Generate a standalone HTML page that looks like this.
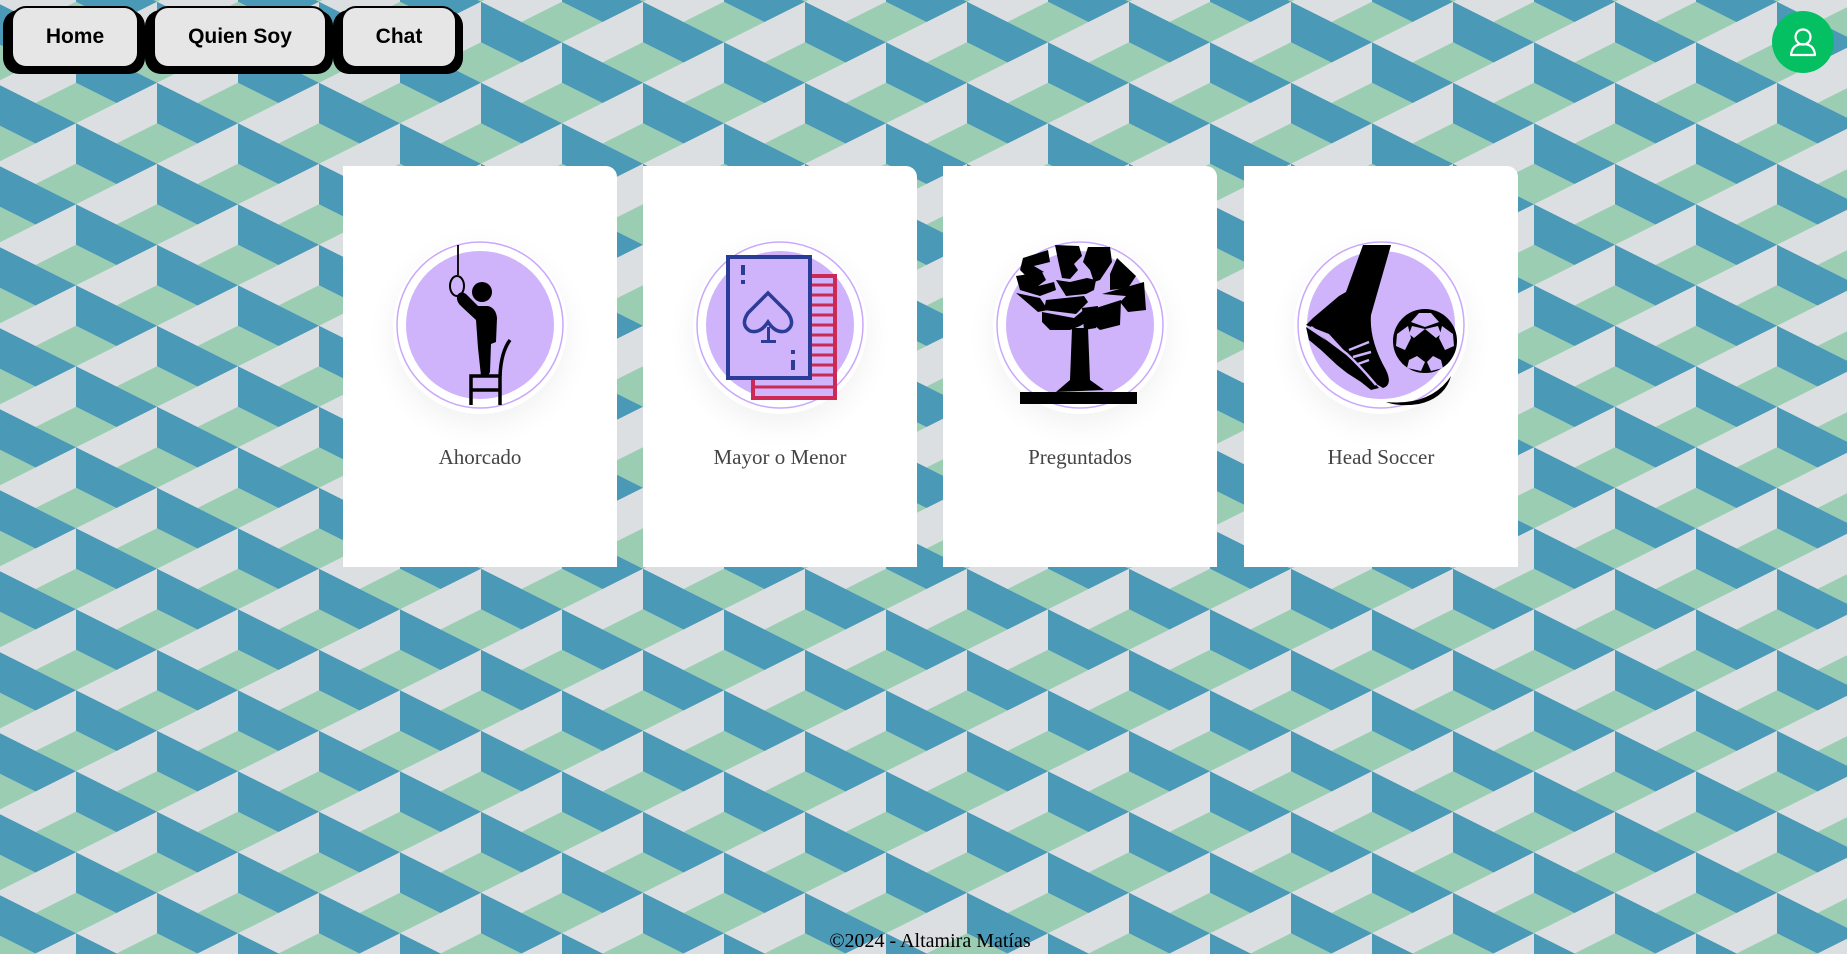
<!DOCTYPE html>
<html><head><meta charset="utf-8"><style>
html,body{margin:0;padding:0;width:1847px;height:954px;overflow:hidden;position:relative;font-family:"Liberation Serif",serif}
#bg{position:absolute;left:0;top:0}
.btn{position:absolute;top:8px;height:58px;background:#e6e6e6;border-radius:13px;box-shadow:0 0 0 2px #000,-7px 5px 0 3px #000,5px 5px 0 3px #000;font:bold 21px "Liberation Sans",sans-serif;color:#000;display:flex;align-items:center;justify-content:center}
.card{position:absolute;top:166px;width:274px;height:401px;background:#fff;border-top-right-radius:11px}
.card svg{position:absolute;left:47px;top:64px}
.card .sh{position:absolute;left:50px;top:74px;width:174px;height:174px;border-radius:50%;box-shadow:0 10px 30px rgba(0,0,0,.06)}
.card .t{position:absolute;left:0;width:100%;top:279px;text-align:center;font-size:21px;color:#444}
.av{position:absolute;left:1772px;top:11px;width:62px;height:62px;border-radius:50%;background:#04c062}
.foot{position:absolute;left:0;width:1860px;text-align:center;top:930px;font-size:20px;color:#000}
</style></head><body>
<svg id="bg" width="1847" height="954">
<defs><pattern id="p" width="162" height="81" patternUnits="userSpaceOnUse" x="76" y="22">
<rect width="162" height="81" fill="#dcdfe2"/>
<g fill="#9bcdb3">
<polygon points="-40.5,0 0,-20.25 40.5,0 0,20.25"/>
<polygon points="-40.5,81 0,60.75 40.5,81 0,101.25"/>
<polygon points="121.5,0 162,-20.25 202.5,0 162,20.25"/>
<polygon points="121.5,81 162,60.75 202.5,81 162,101.25"/>
<polygon points="40.5,40.5 81,20.25 121.5,40.5 81,60.75"/>
</g>
<g fill="#4a99b6">
<polygon points="0,20.25 81,60.75 40.5,81 0,60.75"/>
<polygon points="81,60.75 162,101.25 121.5,121.5 81,101.25"/>
<polygon points="81,-20.25 162,20.25 121.5,40.5 81,20.25"/>
</g>
</pattern></defs>
<rect width="1847" height="954" fill="url(#p)"/>
</svg>

<div class="btn" style="left:13px;width:124px">Home</div>
<div class="btn" style="left:155px;width:170px">Quien Soy</div>
<div class="btn" style="left:343px;width:112px">Chat</div>

<div class="av"><svg width="62" height="62" viewBox="0 0 62 62"><circle cx="31" cy="26" r="7.5" fill="none" stroke="#fff" stroke-width="2.2"/><path d="M19 44 Q20 33 31 33 Q42 33 43 44 Z" fill="none" stroke="#fff" stroke-width="2.2" stroke-linejoin="round"/></svg></div>

<div class="card" style="left:343px">
<div class="sh"></div>
<svg width="190" height="190" viewBox="0 0 190 190">
<circle cx="90" cy="95" r="83" fill="#fff" stroke="#c9a8fb" stroke-width="1.5"/>
<circle cx="90" cy="95" r="74" fill="#cfb3fb"/>
<line x1="68" y1="15" x2="68" y2="45" stroke="#000" stroke-width="1.8"/>
<ellipse cx="67" cy="56" rx="7" ry="10" fill="none" stroke="#000" stroke-width="2"/>
<circle cx="92" cy="62" r="10" fill="#000"/>
<path d="M67 66 Q70 60 76 64 L88 76 L98 76 Q106 78 107 88 L106 112 L101 114 L100 142 Q98 148 91 146 L88 118 L86 90 L72 77 Q66 72 67 66 Z" fill="#000"/>
<g stroke="#000" stroke-width="3.5" fill="none"><path d="M81 175 V146 H110 V175"/><line x1="81" y1="160" x2="110" y2="160"/><path d="M110 146 Q111 122 120 110"/></g>
</svg>
<div class="t">Ahorcado</div></div>

<div class="card" style="left:643px">
<div class="sh"></div>
<svg width="190" height="190" viewBox="0 0 190 190">
<circle cx="90" cy="95" r="83" fill="#fff" stroke="#c9a8fb" stroke-width="1.5"/>
<circle cx="90" cy="95" r="74" fill="#cfb3fb"/>
<rect x="63" y="46" width="82" height="122" fill="#cfb3fb" stroke="#cc2955" stroke-width="4"/>
<g stroke="#cc2955" stroke-width="3">
<path d="M120 55H145M120 65H145M120 75H145M120 85H145M120 95H145M120 105H145M120 115H145M120 125H145M120 135H145M120 145H145M63 157H145"/>
</g>
<rect x="38" y="27" width="82" height="121" fill="#cfb3fb" stroke="#2b3c96" stroke-width="4"/>
<g fill="#2b3c96"><rect x="51" y="35" width="4" height="10"/><rect x="51" y="50" width="4" height="4"/><rect x="101" y="120" width="4" height="4"/><rect x="101" y="130" width="4" height="10"/><rect x="71" y="110" width="15" height="3"/><rect x="77" y="97" width="3" height="14"/></g>
<path d="M78 63 L58 83 Q50 95 60 101 Q70 104 78 92 Q86 104 96 101 Q106 95 98 83 Z" fill="none" stroke="#2b3c96" stroke-width="3.5"/>
</svg>
<div class="t">Mayor o Menor</div></div>

<div class="card" style="left:943px">
<div class="sh"></div>
<svg width="190" height="190" viewBox="0 0 190 190">
<circle cx="90" cy="95" r="83" fill="#fff" stroke="#c9a8fb" stroke-width="1.5"/>
<circle cx="90" cy="95" r="74" fill="#cfb3fb"/>
<g fill="#000">
<polygon points="33,28 58,20 60,32 44,36 54,42 36,46 30,40"/>
<polygon points="26,46 52,42 56,50 48,56 64,52 66,60 50,66 30,60"/>
<polygon points="26,63 50,68 58,80 48,82"/>
<polygon points="65,15 89,16 92,26 84,34 88,40 80,49 72,48 68,30"/>
<polygon points="98,17 120,17 122,32 110,50 104,52 100,40 93,32"/>
<polygon points="66,50 80,52 97,48 106,50 104,60 96,64 76,66"/>
<polygon points="127,28 146,46 138,58 120,60 120,44"/>
<polygon points="112,64 154,52 156,80 138,82 130,72 136,66"/>
<polygon points="56,70 94,66 98,72 86,84 54,80"/>
<polygon points="52,82 84,88 96,78 100,90 90,96 80,100 60,100 52,92"/>
<polygon points="106,78 131,70 130,95 110,100 100,92"/>
<polygon points="82,98 98,98 100,150 114,160 66,162 80,150"/>
<polygon points="92,78 108,76 106,98 94,100"/>
<rect x="30" y="162" width="117" height="12"/>
</g>
</svg>
<div class="t">Preguntados</div></div>

<div class="card" style="left:1244px">
<div class="sh"></div>
<svg width="190" height="190" viewBox="0 0 190 190">
<circle cx="90" cy="95" r="83" fill="#fff" stroke="#c9a8fb" stroke-width="1.5"/>
<circle cx="90" cy="95" r="74" fill="#cfb3fb"/>
<path d="M72 15 L100 15 L80 85 Q78 110 95 140 Q102 155 92 158 L82 152 Q70 140 60 128 L38 104 L15 95 L22 88 L48 66 L55 62 Z" fill="#000"/>
<path d="M15 97 L60 127 L88 158 L80 160 L70 152 L56 143 L46 135 L30 120 L18 110 Z" fill="#000"/>
<g stroke="#cfb3fb" stroke-width="2.5"><path d="M58 120 L78 112 M62 127 L80 122 M67 134 L78 130"/><path d="M20 97 L56 124 Q70 137 85 155"/></g>
<circle cx="134" cy="111" r="32" fill="#000"/>
<g fill="#cfb3fb">
<polygon points="134,100 146,109 141,123 127,123 122,109" fill="#000"/>
<polygon points="128,83 140,83 148,92 134,97 120,92"/>
<polygon points="106,104 117,96 120,108 114,120 105,116"/>
<polygon points="162,104 151,96 148,108 154,120 163,116"/>
<polygon points="118,130 126,126 134,132 130,141 116,138"/>
<polygon points="150,130 142,126 136,132 140,141 152,138"/>
<polygon points="121,96 134,99 123,108 118,104"/>
<polygon points="147,96 134,99 145,108 150,104"/>
</g>
<path d="M95 172 Q140 176 160 146 Q154 168 128 174 Q108 177 95 172 Z" fill="#000"/>
</svg>
<div class="t">Head Soccer</div></div>

<div class="foot">©2024 - Altamira Matías</div>
</body></html>
